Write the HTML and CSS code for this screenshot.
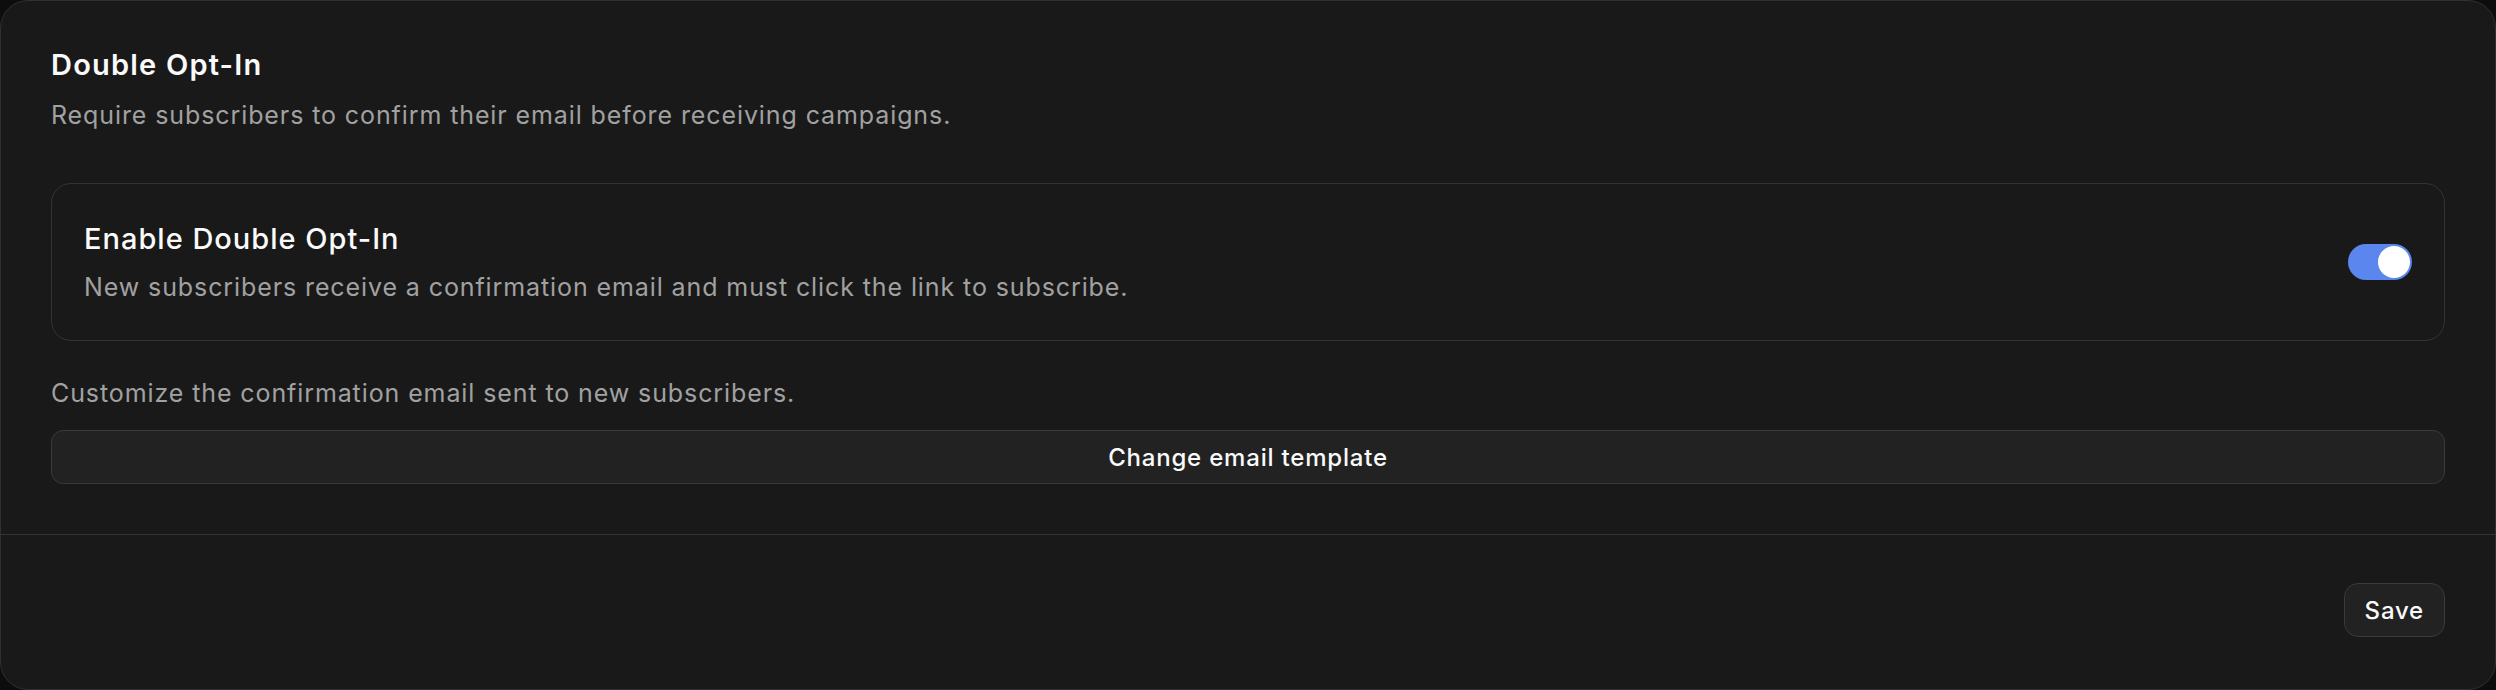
FILE: index.html
```html
<!DOCTYPE html>
<html lang="en">

<head>
    <meta charset="UTF-8">
    <meta name="viewport" content="width=device-width, initial-scale=1.0">
    <title>Double Opt-In Settings</title>
    <link rel="stylesheet" href="styles.css">
</head>

<body>
    <div class="card">
        <div class="card-body">
            <h2 class="card-title">Double Opt-In</h2>
            <p class="card-desc">Require subscribers to confirm their email before receiving campaigns.</p>

            <!-- Toggle row -->
            <div class="setting-row">
                <div class="setting-text">
                    <h3 class="setting-title">Enable Double Opt-In</h3>
                    <p class="setting-desc">New subscribers receive a confirmation email and must click the link to subscribe.</p>
                </div>
                <label class="switch">
                    <input type="checkbox" checked>
                    <span class="slider"></span>
                </label>
            </div>

            <p class="template-note">Customize the confirmation email sent to new subscribers.</p>
            <button class="btn btn-wide">Change email template</button>
        </div>

        <div class="card-footer">
            <button class="btn btn-save">Save</button>
        </div>
    </div>
</body>

</html>
```

FILE: styles.css
```css
body {
    font-family: Inter, "Noto Sans", sans-serif;
    background: #0d0d0d;
    margin: 0;
    padding: 0;
    color: #fafafa;
}

.card {
    background: #191919;
    border: 1px solid #303030;
    border-radius: 28px;
    box-sizing: border-box;
    height: 690px;
}

.card-body {
    padding: 44px 50px 50px;
}

.card-title {
    margin: 0;
    font-size: 29px;
    line-height: 40px;
    font-weight: 600;
    letter-spacing: 1.2px;
}

.card-desc {
    margin: 12px 0 0;
    font-size: 25px;
    line-height: 36px;
    letter-spacing: 0.9px;
    color: #a1a1a1;
}

.setting-row {
    margin-top: 50px;
    border: 1px solid #333;
    border-radius: 20px;
    padding: 35px 32px;
    display: flex;
    align-items: center;
    justify-content: space-between;
}

.setting-title {
    margin: 0;
    font-size: 29px;
    line-height: 40px;
    font-weight: 500;
    letter-spacing: 1px;
}

.setting-desc {
    margin: 10px 0 0;
    font-size: 25px;
    line-height: 36px;
    letter-spacing: 0.9px;
    color: #a1a1a1;
}

/* toggle switch */
.switch {
    position: relative;
    display: inline-block;
    width: 64px;
    height: 36px;
    flex-shrink: 0;
}

.switch input {
    opacity: 0;
    width: 0;
    height: 0;
}

.slider {
    position: absolute;
    inset: 0;
    background: #3a3a3a;
    border-radius: 18px;
    cursor: pointer;
}

.slider::before {
    content: "";
    position: absolute;
    width: 32px;
    height: 32px;
    top: 2px;
    left: 2px;
    background: #fff;
    border-radius: 50%;
}

.switch input:checked + .slider {
    background: #5a86ee;
}

.switch input:checked + .slider::before {
    left: 30px;
}

.template-note {
    margin: 34px 0 0;
    font-size: 25px;
    line-height: 36px;
    letter-spacing: 0.9px;
    color: #a1a1a1;
}

.btn {
    font-family: inherit;
    font-size: 24px;
    font-weight: 500;
    letter-spacing: 0.8px;
    color: #fafafa;
    background: #222;
    border: 1px solid #3a3a3a;
    cursor: pointer;
}

.btn-wide {
    display: block;
    width: 100%;
    height: 54px;
    margin-top: 19px;
    border-radius: 12px;
}

.card-footer {
    border-top: 1px solid #333;
    padding: 48px 50px 51px;
    display: flex;
    justify-content: flex-end;
}

.btn-save {
    height: 54px;
    padding: 0 20px;
    border-radius: 14px;
}
```
